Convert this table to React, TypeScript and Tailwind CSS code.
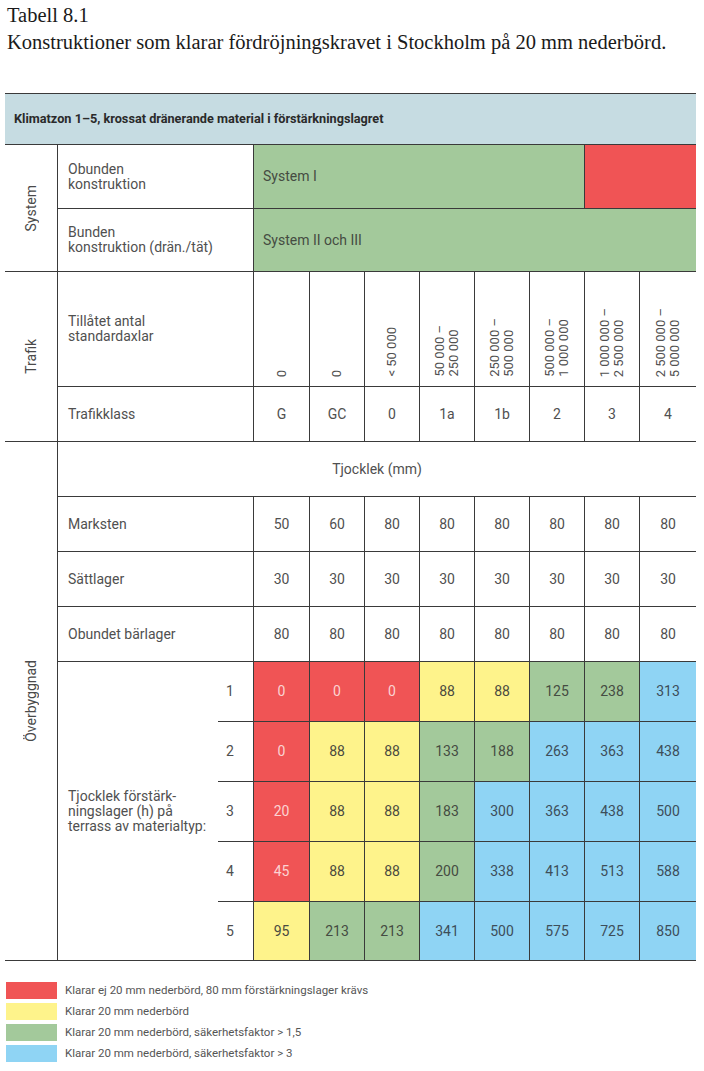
import React from "react";

type C = "R" | "Y" | "G" | "B";

const bgClass: Record<C, string> = {
  R: "bg-[#f05455] text-[#fbd3d2]",
  Y: "bg-[#fef38b] text-[#4a4a40]",
  G: "bg-[#a3c99b] text-[#454c42]",
  B: "bg-[#8fd4f4] text-[#3d4e5a]",
};

const cols = 8;

const traffic = [
  ["0"],
  ["0"],
  ["< 50 000"],
  ["50 000 –", "250 000"],
  ["250 000 –", "500 000"],
  ["500 000 –", "1 000 000"],
  ["1 000 000 –", "2 500 000"],
  ["2 500 000 –", "5 000 000"],
];

const classes = ["G", "GC", "0", "1a", "1b", "2", "3", "4"];

const layers: [string, string[]][] = [
  ["Marksten", ["50", "60", "80", "80", "80", "80", "80", "80"]],
  ["Sättlager", ["30", "30", "30", "30", "30", "30", "30", "30"]],
  ["Obundet bärlager", ["80", "80", "80", "80", "80", "80", "80", "80"]],
];

const colored: [string, C][][] = [
  [["0", "R"], ["0", "R"], ["0", "R"], ["88", "Y"], ["88", "Y"], ["125", "G"], ["238", "G"], ["313", "B"]],
  [["0", "R"], ["88", "Y"], ["88", "Y"], ["133", "G"], ["188", "G"], ["263", "B"], ["363", "B"], ["438", "B"]],
  [["20", "R"], ["88", "Y"], ["88", "Y"], ["183", "G"], ["300", "B"], ["363", "B"], ["438", "B"], ["500", "B"]],
  [["45", "R"], ["88", "Y"], ["88", "Y"], ["200", "G"], ["338", "B"], ["413", "B"], ["513", "B"], ["588", "B"]],
  [["95", "Y"], ["213", "G"], ["213", "G"], ["341", "B"], ["500", "B"], ["575", "B"], ["725", "B"], ["850", "B"]],
];

const bd = "border-[#3a3a3a]";

function ValueCell({ i, children, extra = "" }: { i: number; children: React.ReactNode; extra?: string }) {
  const last = i === cols - 1;
  return (
    <div
      className={`flex items-center justify-center border-b ${bd} ${last ? "" : "border-r"} ${extra}`}
    >
      {children}
    </div>
  );
}

function GroupLabel({ text, span }: { text: string; span: string }) {
  return (
    <div className={`${span} flex items-center justify-center border-r border-b ${bd}`}>
      <span className="[writing-mode:vertical-rl] rotate-180 text-[14px] leading-none text-[#4a4a4a]">
        {text}
      </span>
    </div>
  );
}

export default function App() {
  return (
    <div className="w-[704px] h-[1071px] bg-white font-[Roboto,sans-serif] text-[#505050] overflow-hidden">
      <div className="h-[93px] pl-[7px] pt-[2px] font-['Liberation_Serif',serif] text-[20.5px] leading-[27px] text-[#1a1a1a]">
        <div>Tabell 8.1</div>
        <div>Konstruktioner som klarar fördröjningskravet i Stockholm på 20 mm nederbörd.</div>
      </div>

      <div className="ml-[5px] w-[691px]">
        <div className={`h-[52px] bg-[#c6dce2] border-t border-b ${bd} flex items-center pl-[9px] text-[12.7px] font-bold text-[#2a2a2a]`}>
          <span>Klimatzon 1–5, krossat dränerande material i förstärkningslagret</span>
        </div>

        <div className="grid grid-cols-[53px_160px_36px_56px_55px_55px_55px_55px_55px_55px_56px] grid-rows-[64px_63px_115px_55px_55px_55px_55px_55px_60px_60px_60px_60px_59px] text-[14px] leading-[15px]">
          {/* System */}
          <GroupLabel text="System" span="row-span-2" />
          <div className={`col-span-2 flex items-center pl-[10px] border-r border-b ${bd}`}>
            <div>
              Obunden
              <br />
              konstruktion
            </div>
          </div>
          <div className={`col-span-6 flex items-center pl-[9px] bg-[#a3c99b] text-[#454c42] border-r border-b ${bd}`}>
            System I
          </div>
          <div className={`col-span-2 bg-[#f05455] border-b ${bd}`} />

          <div className={`col-span-2 flex items-center pl-[10px] border-r border-b ${bd}`}>
            <div>
              Bunden
              <br />
              konstruktion (drän./tät)
            </div>
          </div>
          <div className={`col-span-8 flex items-center pl-[9px] bg-[#a3c99b] text-[#454c42] border-b ${bd}`}>
            System II och III
          </div>

          {/* Trafik */}
          <GroupLabel text="Trafik" span="row-span-2" />
          <div className={`col-span-2 flex items-center pl-[10px] border-r border-b ${bd}`}>
            <div>
              Tillåtet antal
              <br />
              standardaxlar
            </div>
          </div>
          {traffic.map((lines, i) => (
            <div
              key={i}
              className={`flex items-end justify-center pb-[9px] border-b ${bd} ${i === cols - 1 ? "" : "border-r"}`}
            >
              <span className="[writing-mode:vertical-rl] rotate-180 text-[13px] leading-[14px] whitespace-nowrap">
                {lines.map((l, j) => (
                  <React.Fragment key={j}>
                    {j > 0 && <br />}
                    {l}
                  </React.Fragment>
                ))}
              </span>
            </div>
          ))}

          <div className={`col-span-2 flex items-center pl-[10px] border-r border-b ${bd}`}>Trafikklass</div>
          {classes.map((c, i) => (
            <ValueCell key={i} i={i}>
              {c}
            </ValueCell>
          ))}

          {/* Överbyggnad */}
          <GroupLabel text="Överbyggnad" span="row-span-9" />
          <div className={`col-span-10 flex items-center justify-center border-b ${bd}`}>Tjocklek (mm)</div>

          {layers.map(([label, vals]) => (
            <React.Fragment key={label}>
              <div className={`col-span-2 flex items-center pl-[10px] border-r border-b ${bd}`}>{label}</div>
              {vals.map((v, i) => (
                <ValueCell key={i} i={i}>
                  {v}
                </ValueCell>
              ))}
            </React.Fragment>
          ))}

          {colored.map((row, r) => (
            <React.Fragment key={r}>
              {r === 0 && (
                <div className={`row-span-5 flex items-center pl-[10px] border-b ${bd}`}>
                  <div>
                    Tjocklek förstärk-
                    <br />
                    ningslager (h) på
                    <br />
                    terrass av materialtyp:
                  </div>
                </div>
              )}
              <div className={`flex items-center pl-[8px] border-r border-b ${bd}`}>{r + 1}</div>
              {row.map(([v, c], i) => (
                <ValueCell key={i} i={i} extra={bgClass[c]}>
                  {v}
                </ValueCell>
              ))}
            </React.Fragment>
          ))}
        </div>

        <div className="mt-[21px] ml-[1px] flex flex-col gap-[4px] text-[11.5px] text-[#555]">
          {[
            ["bg-[#f05455]", "Klarar ej 20 mm nederbörd, 80 mm förstärkningslager krävs"],
            ["bg-[#fef38b]", "Klarar 20 mm nederbörd"],
            ["bg-[#a3c99b]", "Klarar 20 mm nederbörd, säkerhetsfaktor > 1,5"],
            ["bg-[#8fd4f4]", "Klarar 20 mm nederbörd, säkerhetsfaktor > 3"],
          ].map(([cls, text]) => (
            <div key={text} className="flex items-center h-[17px] gap-[8px]">
              <div className={`w-[51px] h-[17px] ${cls}`} />
              <span>{text}</span>
            </div>
          ))}
        </div>
      </div>
    </div>
  );
}
